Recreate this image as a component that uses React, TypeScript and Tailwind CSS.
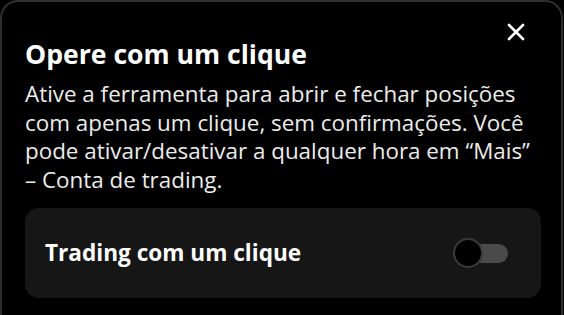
import { useState } from 'react';

function CloseIcon() {
  return (
    <svg width="18" height="18" viewBox="0 0 18 18" fill="none" className="text-white">
      <path d="M2 2L16 16M16 2L2 16" stroke="currentColor" strokeWidth="2.6" strokeLinecap="round" />
    </svg>
  );
}

function Toggle({ on, onChange }: { on: boolean; onChange: (v: boolean) => void }) {
  return (
    <button
      type="button"
      role="switch"
      aria-checked={on}
      onClick={() => onChange(!on)}
      className="relative h-[30px] w-[56px] shrink-0"
    >
      <span className="absolute left-[16px] top-[6px] h-[19px] w-[39px] rounded-full bg-[#4a4a4a]" />
      <span className="absolute left-0 top-0 h-[30px] w-[30px] rounded-full border-2 border-[#3a3a3a] bg-black" />
    </button>
  );
}

export default function App() {
  const [enabled, setEnabled] = useState(false);

  return (
    <div className="h-[315px] w-[564px] overflow-hidden bg-black" style={{ fontFamily: '"Open Sans", sans-serif' }}>
      <div className="h-[340px] w-[563px] rounded-t-[18px] border-x-2 border-t-2 border-[#2e2e2e] bg-black pl-[23px] pr-[4px] pt-[18px]">
        <div className="flex justify-end pr-[32px]">
          <button type="button" className="mt-[3px]">
            <CloseIcon />
          </button>
        </div>
        <h2 className="-mt-[4px] text-[26.6px] font-bold leading-[34px] text-white">Opere com um clique</h2>
        <p className="mt-[9px] pr-[24px] text-[22.4px] leading-[28.5px] text-[#ececec]">
          Ative a ferramenta para abrir e fechar posições com apenas um clique, sem confirmações. Você pode
          ativar/desativar a qualquer hora em “Mais” –&nbsp;Conta de trading.
        </p>
        <div className="mr-[16px] mt-[14px] flex h-[90px] items-center justify-between rounded-[14px] bg-[#161616] pl-[20px] pr-[32px]">
          <span className="text-[22.6px] font-bold text-white">Trading com um clique</span>
          <Toggle on={enabled} onChange={setEnabled} />
        </div>
      </div>
    </div>
  );
}
